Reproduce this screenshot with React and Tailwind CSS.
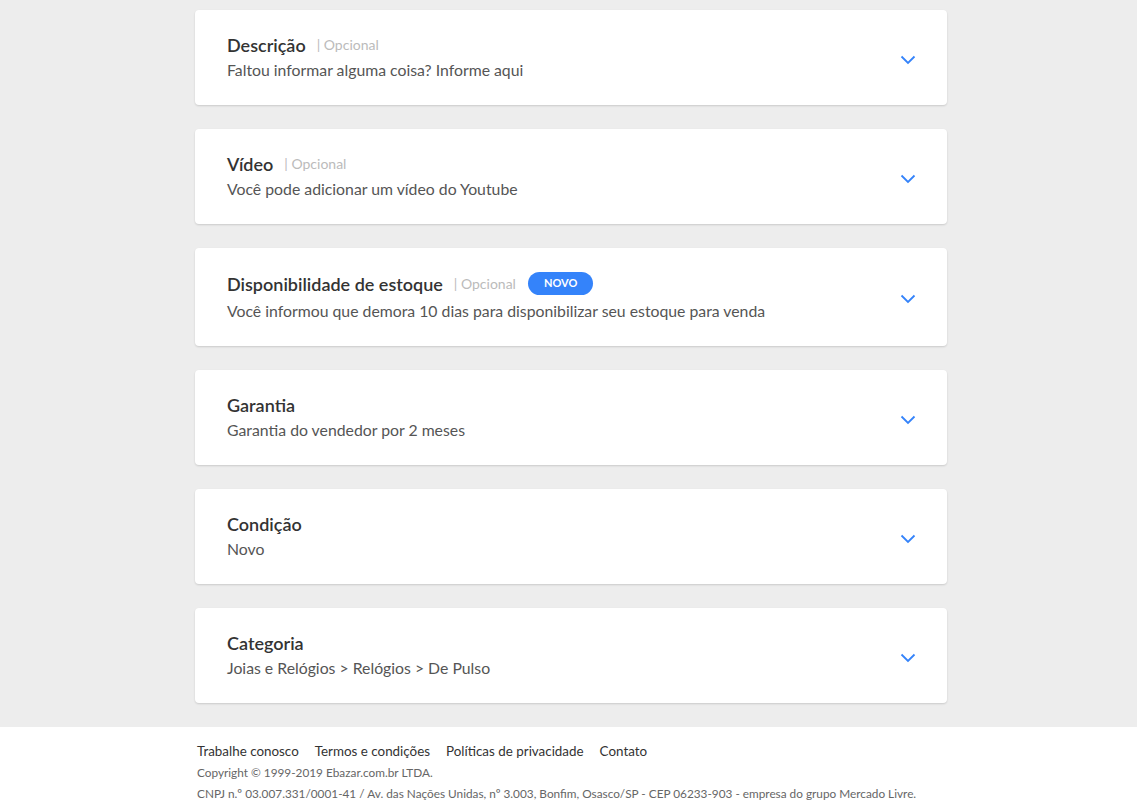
const items = [
  { title: "Descrição", optional: true, text: "Faltou informar alguma coisa? Informe aqui" },
  { title: "Vídeo", optional: true, text: "Você pode adicionar um vídeo do Youtube" },
  {
    title: "Disponibilidade de estoque",
    optional: true,
    badge: "NOVO",
    text: "Você informou que demora 10 dias para disponibilizar seu estoque para venda",
  },
  { title: "Garantia", text: "Garantia do vendedor por 2 meses" },
  { title: "Condição", text: "Novo" },
  { title: "Categoria", text: "Joias e Relógios > Relógios > De Pulso" },
];

const Chevron = () => (
  <svg className="mt-1" width="16" height="10" viewBox="0 0 16 10" fill="none">
    <path d="M1.5 1.5L8 8l6.5-6.5" stroke="#3483fa" strokeWidth="1.8" />
  </svg>
);

const Card = ({ title, optional, badge, text }) => (
  <div className="bg-white rounded shadow-[0_1px_2px_rgba(0,0,0,0.15)] pl-8 pr-[31px] py-6 flex items-center justify-between">
    <div>
      <div className="flex items-center min-h-[22px]">
        <span className="text-[18px] leading-[22px] font-semibold text-[#333]">{title}</span>
        {optional && (
          <span className="text-[14px] leading-[22px] text-[#bbb] ml-[11px]">| Opcional</span>
        )}
        {badge && (
          <span className="ml-[12px] bg-[#3483fa] text-white text-[11px] font-bold rounded-full px-[16px] h-[23px] flex items-center">
            {badge}
          </span>
        )}
      </div>
      <div className={`text-[15.8px] leading-[22px] text-[#555] ${badge ? "mt-[5px]" : "mt-[3px]"}`}>{text}</div>
    </div>
    <Chevron />
  </div>
);

export default function App() {
  return (
    <div className="min-h-screen bg-[#ededed] flex flex-col" style={{ fontFamily: "Lato, 'Open Sans', sans-serif" }}>
      <div className="pl-[5px]">
        <div className="w-[752px] mx-auto pt-[10px] pb-6 flex flex-col gap-6">
          {items.map((it, i) => (
            <Card key={i} {...it} />
          ))}
        </div>
      </div>
      <footer className="bg-white flex-1 pt-4 pb-2 pl-[5px]">
        <div className="w-[752px] mx-auto px-[2px]">
          <div className="flex gap-4 text-[13.4px] leading-[16px] text-[#333]">
            <span>Trabalhe conosco</span>
            <span>Termos e condições</span>
            <span>Políticas de privacidade</span>
            <span>Contato</span>
          </div>
          <div className="text-[11.8px] leading-[14px] text-[#666] mt-[7px]">Copyright © 1999-2019 Ebazar.com.br LTDA.</div>
          <div className="text-[11.8px] leading-[14px] text-[#666] mt-[7px]">
            CNPJ n.º 03.007.331/0001-41 / Av. das Nações Unidas, nº 3.003, Bonfim, Osasco/SP - CEP 06233-903 - empresa do grupo Mercado Livre.
          </div>
        </div>
      </footer>
    </div>
  );
}
